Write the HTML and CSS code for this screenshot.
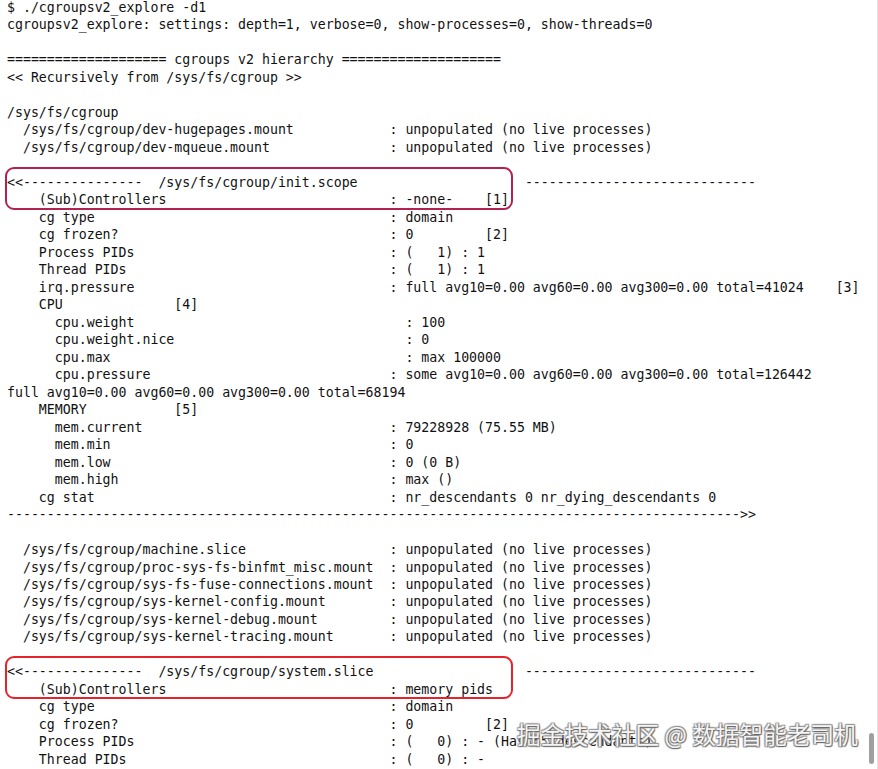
FILE: index.html
```html
<!DOCTYPE html>
<html lang="en">
<head>
<meta charset="utf-8">
<title>cgroupsv2_explore</title>
<link rel="stylesheet" href="styles.css">
</head>
<body>
<div class="screen">
  <div class="term">
    <div class="l">$ ./cgroupsv2_explore -d1</div>
    <div class="l">cgroupsv2_explore: settings: depth=1, verbose=0, show-processes=0, show-threads=0</div>
    <div class="l"></div>
    <div class="l">==================== cgroups v2 hierarchy ====================</div>
    <div class="l">&lt;&lt; Recursively from /sys/fs/cgroup &gt;&gt;</div>
    <div class="l"></div>
    <div class="l">/sys/fs/cgroup</div>
    <div class="l"><span class="k">  /sys/fs/cgroup/dev-hugepages.mount</span>: unpopulated (no live processes)</div>
    <div class="l"><span class="k">  /sys/fs/cgroup/dev-mqueue.mount</span>: unpopulated (no live processes)</div>
    <div class="l"></div>
    <div class="hl">
      <div class="l">&lt;&lt;---------------  <span class="p">/sys/fs/cgroup/init.scope</span>-----------------------------</div>
      <div class="l"><span class="k">    (Sub)Controllers</span>: -none-    [1]</div>
    </div>
    <div class="l"><span class="k">    cg type</span>: domain</div>
    <div class="l"><span class="k">    cg frozen?</span>: 0         [2]</div>
    <div class="l"><span class="k">    Process PIDs</span>: (   1) : 1</div>
    <div class="l"><span class="k">    Thread PIDs</span>: (   1) : 1</div>
    <div class="l"><span class="k">    irq.pressure</span>: full avg10=0.00 avg60=0.00 avg300=0.00 total=41024    [3]</div>
    <div class="l">    CPU              [4]</div>
    <div class="l"><span class="k2">      cpu.weight</span>: 100</div>
    <div class="l"><span class="k2">      cpu.weight.nice</span>: 0</div>
    <div class="l"><span class="k2">      cpu.max</span>: max 100000</div>
    <div class="l"><span class="k">      cpu.pressure</span>: some avg10=0.00 avg60=0.00 avg300=0.00 total=126442</div>
    <div class="l">full avg10=0.00 avg60=0.00 avg300=0.00 total=68194</div>
    <div class="l">    MEMORY           [5]</div>
    <div class="l"><span class="k">      mem.current</span>: 79228928 (75.55 MB)</div>
    <div class="l"><span class="k">      mem.min</span>: 0</div>
    <div class="l"><span class="k">      mem.low</span>: 0 (0 B)</div>
    <div class="l"><span class="k">      mem.high</span>: max ()</div>
    <div class="l"><span class="k">    cg stat</span>: nr_descendants 0 nr_dying_descendants 0</div>
    <div class="l">--------------------------------------------------------------------------------------------&gt;&gt;</div>
    <div class="l"></div>
    <div class="l"><span class="k">  /sys/fs/cgroup/machine.slice</span>: unpopulated (no live processes)</div>
    <div class="l"><span class="k">  /sys/fs/cgroup/proc-sys-fs-binfmt_misc.mount</span>: unpopulated (no live processes)</div>
    <div class="l"><span class="k">  /sys/fs/cgroup/sys-fs-fuse-connections.mount</span>: unpopulated (no live processes)</div>
    <div class="l"><span class="k">  /sys/fs/cgroup/sys-kernel-config.mount</span>: unpopulated (no live processes)</div>
    <div class="l"><span class="k">  /sys/fs/cgroup/sys-kernel-debug.mount</span>: unpopulated (no live processes)</div>
    <div class="l"><span class="k">  /sys/fs/cgroup/sys-kernel-tracing.mount</span>: unpopulated (no live processes)</div>
    <div class="l"></div>
    <div class="hl red">
      <div class="l">&lt;&lt;---------------  <span class="p">/sys/fs/cgroup/system.slice</span>-----------------------------</div>
      <div class="l"><span class="k">    (Sub)Controllers</span>: memory pids</div>
    </div>
    <div class="l"><span class="k">    cg type</span>: domain</div>
    <div class="l"><span class="k">    cg frozen?</span>: 0         [2]</div>
    <div class="l"><span class="k">    Process PIDs</span>: (   0) : - (Has 55 descendants)</div>
    <div class="l"><span class="k">    Thread PIDs</span>: (   0) : -</div>
  </div>
  <div class="wm">掘金技术社区 @ 数据智能老司机</div>
  <div class="scroll"></div>
</div>
</body>
</html>
```
FILE: styles.css
```css
html, body {
  margin: 0;
  padding: 0;
  height: 100%;
  overflow: hidden;
  background: #ffffff;
}

.screen {
  position: relative;
  height: 769px;
  overflow: hidden;
  border-right: 1px solid #e2e2e2;
  box-sizing: border-box;
}

.term {
  font-family: "DejaVu Sans Mono", monospace;
  font-size: 13.24px;
  line-height: 17.49px;
  color: #111111;
  padding-left: 7px;
  margin-top: -1px;
}

.l {
  height: 17.49px;
  white-space: pre;
}

.k {
  display: inline-block;
  width: 48ch;
}

.k2 {
  display: inline-block;
  width: 50ch;
}

.p {
  display: inline-block;
  width: 46ch;
}

.hl {
  position: relative;
}

.hl::after {
  content: "";
  position: absolute;
  left: -2px;
  top: -7px;
  bottom: -1px;
  width: 508px;
  box-sizing: border-box;
  border: 2px solid #b3214f;
  border-radius: 9px;
}

.hl.red::after {
  border-color: #e5232b;
}

.wm {
  position: absolute;
  left: 517px;
  top: 721px;
  font-family: "Noto Sans CJK SC", sans-serif;
  font-size: 23.7px;
  line-height: 26px;
  color: #f4f4f4;
  white-space: nowrap;
  text-shadow: 1px 1px 1px #666666, -1px -1px 1px #999999, 1px -1px 1px #888888, -1px 1px 1px #888888;
}

.scroll {
  position: absolute;
  right: 3px;
  top: 733px;
  width: 5px;
  height: 31px;
  border-radius: 3px;
  background: #a0a0a0;
}
```
